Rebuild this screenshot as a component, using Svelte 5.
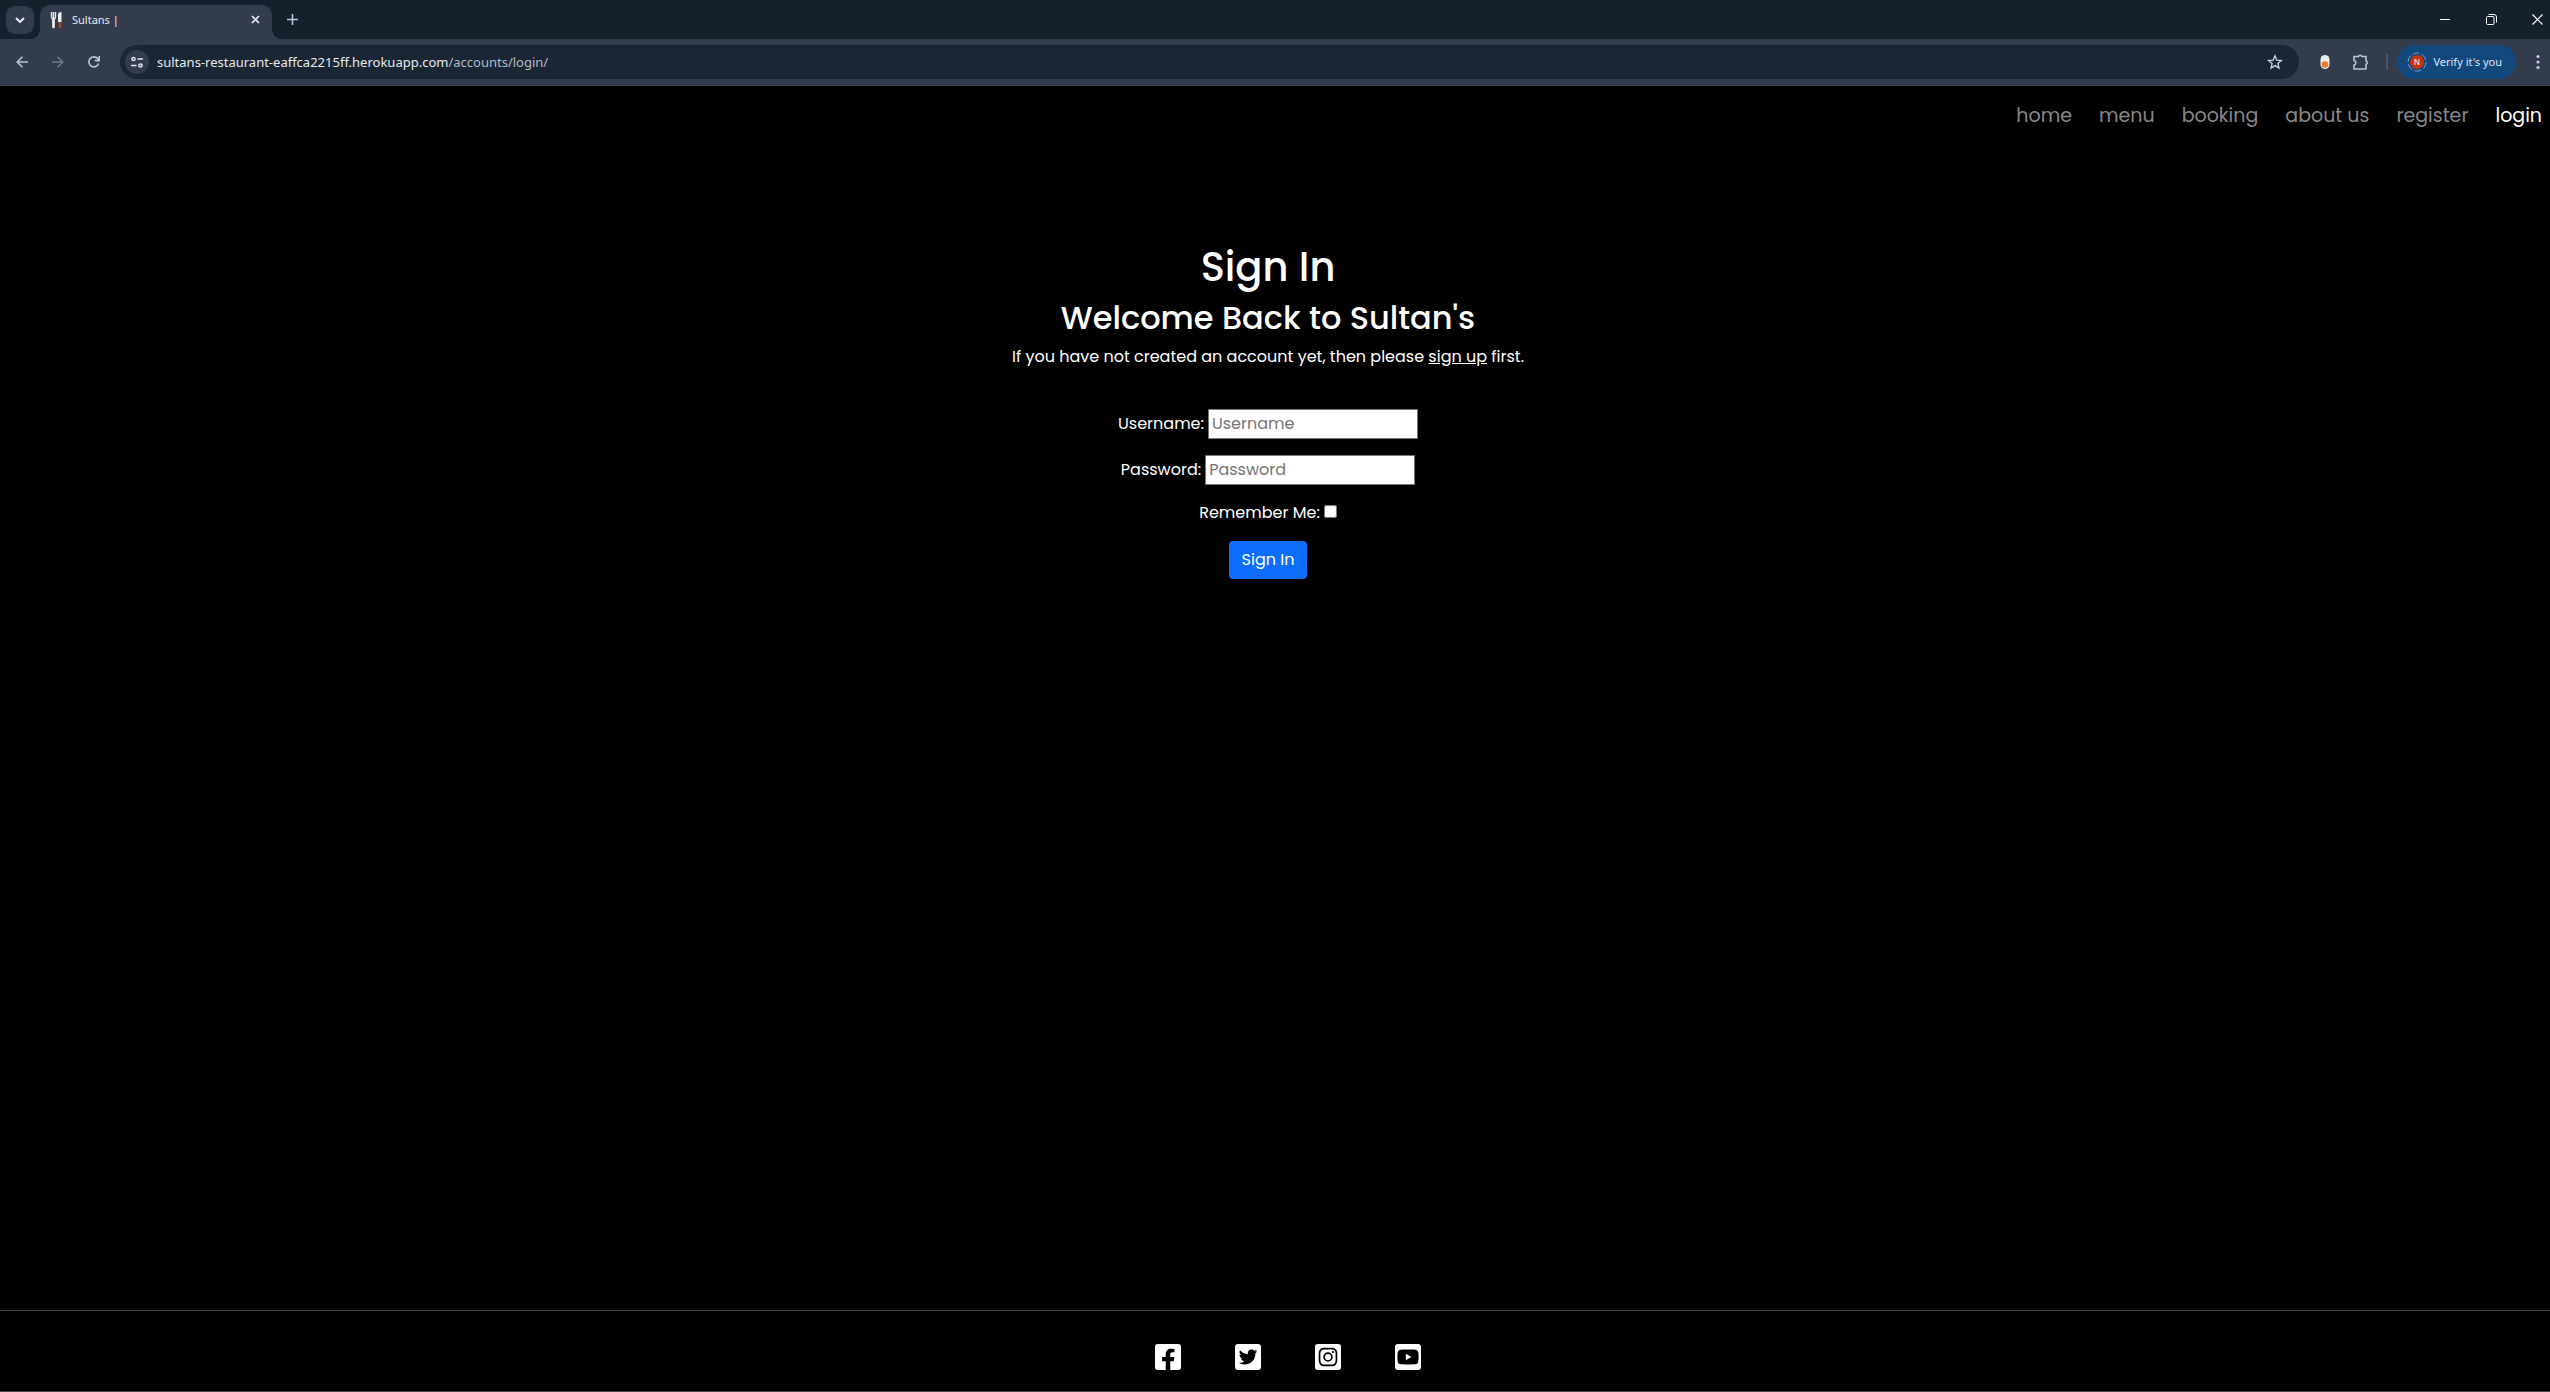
<script>
  const navLinks = ['home', 'menu', 'booking', 'about us', 'register', 'login'];
  const current = 'login';
  const socials = [
    {
      name: 'Facebook',
      d: 'M48 32h352a48 48 0 0 1 48 48v352a48 48 0 0 1-48 48H263V328h60l11-70h-71v-44c0-20 9-38 40-38h31v-59s-28-5-55-5c-57 0-94 34-94 96v50h-63v70h63v152H48a48 48 0 0 1-48-48V80a48 48 0 0 1 48-48z'
    },
    {
      name: 'Twitter',
      d: 'M400 32H48C21.500 32 0 53.500 0 80v352c0 26.500 21.500 48 48 48h352c26.500 0 48-21.500 48-48V80c0-26.500-21.500-48-48-48zm-48.900 158.800c.2 2.800.2 5.700.2 8.500 0 86.700-66 186.600-186.600 186.600-37.200 0-71.700-10.800-100.700-29.400 5.300.6 10.400.8 15.800.8 30.700 0 58.900-10.400 81.400-28-28.800-.6-53-19.500-61.300-45.500 10.100 1.500 19.200 1.500 29.600-1.200-30-6.100-52.500-32.500-52.500-64.400v-.8c8.700 4.900 18.900 7.900 29.600 8.300a65.447 65.447 0 0 1-29.200-54.600c0-12.200 3.200-23.400 8.900-33.100 32.300 39.800 80.800 65.800 135.200 68.600-9.300-44.500 24-80.600 64-80.600 18.900 0 35.900 7.900 47.900 20.700 14.800-2.800 29-8.300 41.600-15.800-4.900 15.200-15.200 28-28.800 36.100 13.200-1.400 26-5.100 37.800-10.200-8.900 13.100-20.100 24.700-32.900 34z'
    },
    {
      name: 'Instagram',
      d: 'M224 202.660A53.340 53.340 0 1 0 277.360 256 53.380 53.380 0 0 0 224 202.660zm124.710-41a54 54 0 0 0-30.410-30.410c-21-8.290-71-6.430-94.300-6.430s-73.250-1.930-94.310 6.430a54 54 0 0 0-30.410 30.410c-8.280 21-6.430 71.050-6.430 94.330s-1.850 73.270 6.470 94.340a54 54 0 0 0 30.410 30.410c21 8.290 71 6.430 94.310 6.430s73.240 1.930 94.300-6.430a54 54 0 0 0 30.410-30.410c8.350-21 6.430-71.050 6.430-94.330s1.920-73.260-6.430-94.330zM224 338a82 82 0 1 1 82-82 81.900 81.900 0 0 1-82 82zm85.380-148.300a19.140 19.140 0 1 1 19.130-19.140 19.100 19.100 0 0 1-19.090 19.180zM400 32H48A48 48 0 0 0 0 80v352a48 48 0 0 0 48 48h352a48 48 0 0 0 48-48V80a48 48 0 0 0-48-48zm-17.120 290c-1.290 25.630-7.140 48.340-25.850 67s-41.400 24.630-67 25.850c-26.410 1.490-105.590 1.490-132 0-25.630-1.290-48.260-7.150-67-25.850s-24.630-41.420-25.850-67c-1.490-26.420-1.490-105.610 0-132 1.290-25.630 7.070-48.340 25.850-67s41.470-24.560 67-25.780c26.410-1.490 105.590-1.490 132 0 25.630 1.290 48.330 7.150 67 25.850s24.630 41.420 25.850 67.050c1.490 26.320 1.490 105.440 0 131.880z'
    },
    {
      name: 'YouTube',
      d: 'M186.800 202.100l95.200 54.100-95.200 54.100V202.100zM448 80v352c0 26.500-21.500 48-48 48H48c-26.500 0-48-21.500-48-48V80c0-26.500 21.500-48 48-48h352c26.500 0 48 21.500 48 48zm-42 176.300s0-59.600-7.600-88.200c-4.200-15.800-16.500-28.200-32.200-32.400C337.900 128 224 128 224 128s-113.900 0-142.200 7.700c-15.700 4.200-28 16.600-32.200 32.400-7.600 28.500-7.600 88.200-7.600 88.200s0 59.600 7.600 88.200c4.200 15.800 16.500 27.700 32.200 31.900C110.100 384 224 384 224 384s113.900 0 142.200-7.700c15.700-4.200 28-16.100 32.200-31.900 7.600-28.500 7.600-88.100 7.600-88.100z'
    }
  ];
</script>

<div class="window">
  <header class="chrome">
    <div class="tabstrip">
      <button class="tabsearch" aria-label="Search tabs">
        <svg width="10" height="6" viewBox="0 0 10 6"><path d="M1 1l4 4 4-4" fill="none" stroke="#e6eaf0" stroke-width="2" /></svg>
      </button>
      <div class="tab">
        <svg width="14" height="18" viewBox="0 0 14 18">
          <path d="M1.500 1v5q0 2 2 2.500 2-.5 2-2.500V1M3.500 1v6" fill="none" stroke="#e9e9ea" stroke-width="1.400" />
          <path d="M3.500 8v8" stroke="#e9e9ea" stroke-width="2.800" stroke-linecap="round" />
          <path d="M11.500 1v10H8V4q0-3 3.500-3z" fill="#f0f0f0" />
          <path d="M8.500 11h3v6h-3z" fill="#9a4a2a" />
        </svg>
        <span class="tabtitle">Sultans |</span>
        <button class="bare" aria-label="Close tab">
          <svg width="9" height="9" viewBox="0 0 9 9"><path d="M1 1l7 7M8 1L1 8" stroke="#e6eaf0" stroke-width="1.700" /></svg>
        </button>
      </div>
      <button class="bare newtab" aria-label="New tab">
        <svg width="11" height="11" viewBox="0 0 11 11"><path d="M5.500 0v11M0 5.500h11" stroke="#b9c4d6" stroke-width="1.600" /></svg>
      </button>
      <div class="wincontrols">
        <button class="bare" aria-label="Minimize"><svg width="11" height="11" viewBox="0 0 11 11"><path d="M0 5.500h10" stroke="#fff" /></svg></button>
        <button class="bare" aria-label="Restore"><svg width="11" height="11" viewBox="0 0 11 11" fill="none" stroke="#fff"><rect x=".5" y="2.500" width="7.500" height="8" rx="1" /><path d="M2.500.5H8q2.500 0 2.500 2.500v5.500" /></svg></button>
        <button class="bare" aria-label="Close"><svg width="11" height="11" viewBox="0 0 11 11"><path d="M.5.5l10 10M10.500.5l-10 10" stroke="#fff" stroke-width="1.200" /></svg></button>
      </div>
    </div>
    <div class="toolbar">
      <div class="history">
        <button class="bare" aria-label="Back"><svg width="12" height="12" viewBox="0 0 12 12" fill="none" stroke="#b9c4d6" stroke-width="1.600"><path d="M12 6H1M6.500.7L1.200 6l5.300 5.300" /></svg></button>
        <button class="bare" aria-label="Forward"><svg width="12" height="12" viewBox="0 0 12 12" fill="none" stroke="#707a8a" stroke-width="1.600"><path d="M0 6h11M5.500.7L10.800 6l-5.300 5.300" /></svg></button>
        <button class="bare" aria-label="Reload"><svg width="12" height="12" viewBox="0 0 12 12" fill="none" stroke="#b9c4d6" stroke-width="1.600"><path d="M10.600 7.500A5 5 0 1 1 9.800 2.800L11 4.300M11.200 0v4.600H6.800" /></svg></button>
      </div>
      <div class="omnibox">
        <button class="siteinfo" aria-label="View site information">
          <svg width="12" height="12" viewBox="0 0 12 12" fill="none" stroke="#dfe5ee" stroke-width="1.500"><circle cx="2.500" cy="3" r="1.600" /><path d="M6.500 3H12M0 9.500h5.500" /><circle cx="9.500" cy="9.500" r="1.600" /></svg>
        </button>
        <span class="url">sultans-restaurant-eaffca2215ff.herokuapp.com<span class="path">/accounts/login/</span></span>
        <button class="bare" aria-label="Bookmark this tab"><svg width="16" height="16" viewBox="0 0 16 16"><path d="M8 1.800l1.800 4.300 4.700.4-3.600 3 1.100 4.600L8 11.600l-4 2.500 1.100-4.600-3.600-3 4.700-.4z" fill="none" stroke="#c9d1de" stroke-width="1.300" /></svg></button>
      </div>
      <div class="extensions">
        <button class="bare" aria-label="Extension"><svg width="10" height="16" viewBox="0 0 10 16"><rect x=".5" y="1" width="9" height="14" rx="4.500" fill="#eceae8" /><circle cx="5" cy="10.500" r="3.300" fill="#f27a2c" /></svg></button>
        <button class="bare" aria-label="Extensions"><svg width="18" height="18" viewBox="0 0 18 18"><path d="M2 3.500h4.500a1.700 1.700 0 0 1 3.300 0H14V8a1.700 1.700 0 0 1 0 3.300V16H2v-4a2.300 2.300 0 0 0 0-4.500z" fill="none" stroke="#b9c4d6" stroke-width="1.600" stroke-linejoin="round" /></svg></button>
        <span class="divider"></span>
        <button class="profile">
          <svg width="20" height="20" viewBox="0 0 20 20"><circle cx="10" cy="10" r="9" fill="none" stroke="#6fa0d2" stroke-width="1" stroke-dasharray="7 2.400" /><circle cx="10" cy="10" r="7" fill="#c5340c" /><text x="10" y="13" text-anchor="middle" font-size="8" font-weight="600" fill="#f5dcd4">N</text></svg>
          <span>Verify it's you</span>
        </button>
        <button class="bare" aria-label="Menu"><svg width="4" height="16" viewBox="0 0 4 16" fill="#c9d1de"><circle cx="2" cy="2.500" r="1.600" /><circle cx="2" cy="8" r="1.600" /><circle cx="2" cy="13.500" r="1.600" /></svg></button>
      </div>
    </div>
  </header>

  <nav>
    {#each navLinks as link}
      <a href="#{link.replace(' ', '-')}" class:active={link === current}>{link}</a>
    {/each}
  </nav>

  <main>
    <h1>Sign In</h1>
    <h2>Welcome Back to Sultan's</h2>
    <p>If you have not created an account yet, then please <a href="#signup">sign up</a> first.</p>
    <form>
      <div class="field">
        <label for="username">Username:</label>
        <input id="username" type="text" placeholder="Username" />
      </div>
      <div class="field">
        <label for="password">Password:</label>
        <input id="password" type="password" placeholder="Password" />
      </div>
      <div class="remember">
        <label for="remember">Remember Me:</label>
        <input id="remember" type="checkbox" />
      </div>
      <button class="submit" type="button">Sign In</button>
    </form>
  </main>

  <footer>
    {#each socials as social}
      <a href="#{social.name.toLowerCase()}" aria-label={social.name}>
        <svg width="26" height="30" viewBox="0 0 448 512"><path d={social.d} fill="#fff" /></svg>
      </a>
    {/each}
  </footer>
</div>

<style>
  :global(body) {
    margin: 0;
    background: #000;
  }
  .window {
    display: flex;
    flex-direction: column;
    min-height: 100vh;
    box-sizing: border-box;
    border-bottom: 1px solid #4a4a4a;
    background: #000;
    color: #fff;
    font: 16px/24px Poppins, Inter, sans-serif;
  }
  svg {
    display: block;
  }
  .chrome {
    background: #323c4d;
    border-bottom: 1px solid #45484d;
    font: 11px/16px "Segoe UI", "Noto Sans", sans-serif;
  }
  .bare {
    padding: 0;
    border: 0;
    background: none;
  }
  .tabstrip {
    display: flex;
    align-items: center;
    height: 39px;
    padding-left: 6px;
    background: #15202d;
  }
  .tabsearch {
    display: grid;
    place-items: center;
    width: 28px;
    height: 28px;
    padding: 0;
    border: 0;
    border-radius: 9px;
    background: #323c4d;
  }
  .tab {
    position: relative;
    display: flex;
    align-items: center;
    align-self: flex-end;
    box-sizing: border-box;
    width: 232px;
    height: 34px;
    margin-left: 6px;
    padding: 0 12px 5px 10px;
    border-radius: 10px 10px 0 0;
    background: #323c4d;
  }
  .tab::before,
  .tab::after {
    content: "";
    position: absolute;
    bottom: 0;
    width: 10px;
    height: 10px;
  }
  .tab::before {
    right: 100%;
    background: radial-gradient(circle at 0 0, transparent 10px, #323c4d 10px);
  }
  .tab::after {
    left: 100%;
    background: radial-gradient(circle at 100% 0, transparent 10px, #323c4d 10px);
  }
  .tabtitle {
    flex: 1;
    margin-left: 8px;
    color: #e6eaf0;
  }
  .newtab {
    margin-left: 15px;
  }
  .wincontrols {
    display: flex;
    gap: 35px;
    margin-left: auto;
    padding-right: 7px;
  }
  .toolbar {
    display: flex;
    align-items: center;
    height: 46px;
  }
  .history {
    display: flex;
    gap: 24px;
    padding: 0 20px 0 16px;
  }
  .omnibox {
    display: flex;
    flex: 1;
    align-items: center;
    height: 34px;
    padding: 0 16px 0 5px;
    border-radius: 17px;
    background: #1b2635;
  }
  .siteinfo {
    display: grid;
    place-items: center;
    width: 24px;
    height: 24px;
    padding: 0;
    border: 0;
    border-radius: 50%;
    background: #323c4d;
  }
  .url {
    flex: 1;
    margin-left: 8px;
    color: #e6eaf0;
    font-size: 13px;
  }
  .path {
    color: #b4bbc6;
  }
  .extensions {
    display: flex;
    align-items: center;
    padding: 0 10px 0 21px;
  }
  .extensions > :nth-child(2) {
    margin-left: 22px;
  }
  .divider {
    width: 2px;
    height: 16px;
    margin: 0 9px 0 16px;
    background: #4a5568;
  }
  .profile {
    display: flex;
    align-items: center;
    gap: 6px;
    height: 34px;
    margin-right: 20px;
    padding: 0 14px 0 10px;
    border: 0;
    border-radius: 17px;
    background: #13487c;
    color: #d6e6fa;
    font: inherit;
  }
  nav {
    display: flex;
    justify-content: flex-end;
    gap: 27px;
    padding: 15px 8px 0 0;
    font-size: 19px;
    line-height: 30px;
  }
  nav a {
    color: #888;
    text-decoration: none;
  }
  nav .active {
    color: #fff;
  }
  main {
    flex: 1;
    padding: 112px 14px 0 0;
    text-align: center;
  }
  h1,
  h2 {
    margin: 0 0 8px;
    font-weight: 500;
  }
  h1 {
    font-size: 40px;
    line-height: 48px;
  }
  h2 {
    font-size: 32px;
    line-height: 38px;
  }
  p {
    margin: 0;
  }
  p a {
    color: inherit;
  }
  form {
    display: flex;
    flex-direction: column;
    align-items: center;
    gap: 16px;
    margin-top: 40px;
  }
  .field,
  .remember {
    display: flex;
    align-items: center;
    gap: 4px;
  }
  .field input {
    box-sizing: border-box;
    width: 210px;
    height: 30px;
    padding: 0 3px 2px;
    border: 1px solid #767676;
    background: #fff;
    color: #000;
    font: inherit;
  }
  .field input::placeholder {
    color: #757575;
  }
  .remember input {
    width: 13px;
    height: 13px;
    margin: 0 0 3px;
  }
  .submit {
    height: 38px;
    padding: 0 13px;
    border: 0;
    border-radius: 4px;
    background: #0d6efd;
    color: #fff;
    font: inherit;
  }
  footer {
    display: flex;
    justify-content: center;
    gap: 54px;
    padding: 31px 0 19px 26px;
    border-top: 1px solid #404040;
  }
</style>
